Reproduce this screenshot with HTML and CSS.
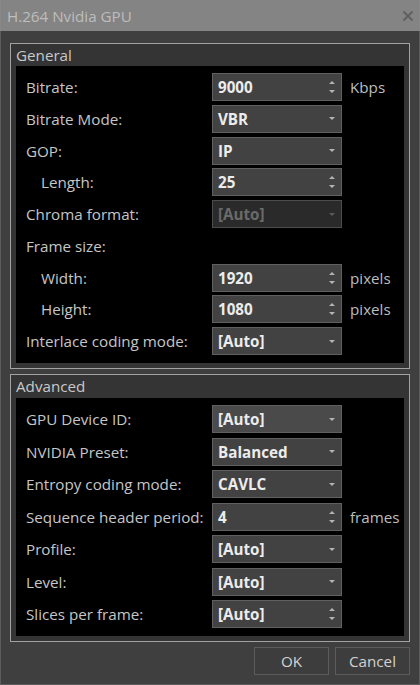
FILE: index.html
```html
<!DOCTYPE html>
<html>
<head>
<meta charset="utf-8">
<link rel="stylesheet" href="styles.css">
</head>
<body>
<div class="window">
  <div class="titlebar">
    <span class="title">H.264 Nvidia GPU</span>
    <svg class="close" width="12" height="12" viewBox="0 0 12 12"><path d="M1.5 1.5 L10.5 10.5 M10.5 1.5 L1.5 10.5" stroke="#606060" stroke-width="2" fill="none"/></svg>
  </div>
  <div class="content">
    <div class="group">
      <div class="group-title">General</div>
      <div class="panel general">
        <div class="label">Bitrate:</div>
        <div class="ctrl spin"><span class="val">9000</span><svg class="arrows" width="8" height="14" viewBox="0 0 8 14"><path d="M1 4 L4 1 L7 4 Z M1 10 L4 13 L7 10 Z" fill="#b4b4b4"/></svg></div>
        <div class="unit">Kbps</div>

        <div class="label">Bitrate Mode:</div>
        <div class="ctrl combo"><span class="val">VBR</span><svg class="arrow" width="8" height="5" viewBox="0 0 8 5"><path d="M1 1 L7 1 L4 4 Z" fill="#b4b4b4"/></svg></div>
        <div class="unit"></div>

        <div class="label">GOP:</div>
        <div class="ctrl combo"><span class="val">IP</span><svg class="arrow" width="8" height="5" viewBox="0 0 8 5"><path d="M1 1 L7 1 L4 4 Z" fill="#b4b4b4"/></svg></div>
        <div class="unit"></div>

        <div class="label indent">Length:</div>
        <div class="ctrl spin"><span class="val">25</span><svg class="arrows" width="8" height="14" viewBox="0 0 8 14"><path d="M1 4 L4 1 L7 4 Z M1 10 L4 13 L7 10 Z" fill="#b4b4b4"/></svg></div>
        <div class="unit"></div>

        <div class="label">Chroma format:</div>
        <div class="ctrl combo disabled"><span class="val">[Auto]</span><svg class="arrow" width="8" height="5" viewBox="0 0 8 5"><path d="M1 1 L7 1 L4 4 Z" fill="#5a5a5a"/></svg></div>
        <div class="unit"></div>

        <div class="label">Frame size:</div>
        <div class="empty"></div>
        <div class="unit"></div>

        <div class="label indent">Width:</div>
        <div class="ctrl spin"><span class="val">1920</span><svg class="arrows" width="8" height="14" viewBox="0 0 8 14"><path d="M1 4 L4 1 L7 4 Z M1 10 L4 13 L7 10 Z" fill="#b4b4b4"/></svg></div>
        <div class="unit">pixels</div>

        <div class="label indent">Height:</div>
        <div class="ctrl spin"><span class="val">1080</span><svg class="arrows" width="8" height="14" viewBox="0 0 8 14"><path d="M1 4 L4 1 L7 4 Z M1 10 L4 13 L7 10 Z" fill="#b4b4b4"/></svg></div>
        <div class="unit">pixels</div>

        <div class="label">Interlace coding mode:</div>
        <div class="ctrl combo"><span class="val">[Auto]</span><svg class="arrow" width="8" height="5" viewBox="0 0 8 5"><path d="M1 1 L7 1 L4 4 Z" fill="#b4b4b4"/></svg></div>
        <div class="unit"></div>
      </div>
    </div>

    <div class="group advanced-group">
      <div class="group-title">Advanced</div>
      <div class="panel advanced">
        <div class="label">GPU Device ID:</div>
        <div class="ctrl combo hot"><span class="val">[Auto]</span><svg class="arrow" width="8" height="5" viewBox="0 0 8 5"><path d="M1 1 L7 1 L4 4 Z" fill="#b4b4b4"/></svg></div>
        <div class="unit"></div>

        <div class="label">NVIDIA Preset:</div>
        <div class="ctrl combo"><span class="val">Balanced</span><svg class="arrow" width="8" height="5" viewBox="0 0 8 5"><path d="M1 1 L7 1 L4 4 Z" fill="#b4b4b4"/></svg></div>
        <div class="unit"></div>

        <div class="label">Entropy coding mode:</div>
        <div class="ctrl combo"><span class="val">CAVLC</span><svg class="arrow" width="8" height="5" viewBox="0 0 8 5"><path d="M1 1 L7 1 L4 4 Z" fill="#b4b4b4"/></svg></div>
        <div class="unit"></div>

        <div class="label">Sequence header period:</div>
        <div class="ctrl spin"><span class="val">4</span><svg class="arrows" width="8" height="14" viewBox="0 0 8 14"><path d="M1 4 L4 1 L7 4 Z M1 10 L4 13 L7 10 Z" fill="#b4b4b4"/></svg></div>
        <div class="unit">frames</div>

        <div class="label">Profile:</div>
        <div class="ctrl combo"><span class="val">[Auto]</span><svg class="arrow" width="8" height="5" viewBox="0 0 8 5"><path d="M1 1 L7 1 L4 4 Z" fill="#b4b4b4"/></svg></div>
        <div class="unit"></div>

        <div class="label">Level:</div>
        <div class="ctrl combo"><span class="val">[Auto]</span><svg class="arrow" width="8" height="5" viewBox="0 0 8 5"><path d="M1 1 L7 1 L4 4 Z" fill="#b4b4b4"/></svg></div>
        <div class="unit"></div>

        <div class="label">Slices per frame:</div>
        <div class="ctrl spin"><span class="val">[Auto]</span><svg class="arrows" width="8" height="14" viewBox="0 0 8 14"><path d="M1 4 L4 1 L7 4 Z M1 10 L4 13 L7 10 Z" fill="#b4b4b4"/></svg></div>
        <div class="unit"></div>
      </div>
    </div>

    <div class="buttons">
      <div class="btn">OK</div>
      <div class="btn">Cancel</div>
    </div>
  </div>
</div>
</body>
</html>
```

FILE: styles.css
```css
html, body {
  margin: 0;
  padding: 0;
  background: #3f3f3f;
}
.window {
  width: 420px;
  height: 685px;
  box-sizing: border-box;
  border: 1px solid #5c5c5c;
  border-top: none;
  background: #3f3f3f;
  font-family: "Open Sans", "Noto Sans", sans-serif;
  font-size: 15.2px;
  color: #c4c4c4;
  display: flex;
  flex-direction: column;
}
.titlebar {
  height: 31px;
  background: #848484;
  display: flex;
  align-items: center;
  justify-content: space-between;
  padding: 0 5px 0 6px;
  margin: 0 -1px;
  border-left: 1px solid #888;
  border-right: 1px solid #888;
}
.title {
  color: #bdbdbd;
  font-size: 15.2px;
}
.close {
  display: block;
}
.content {
  padding: 12px 9px 0 9px;
  display: flex;
  flex-direction: column;
}
.group {
  border: 1px solid #a2a2a2;
  background: #343434;
  padding: 0 5px 5px 5px;
}
.advanced-group {
  margin-top: 5px;
}
.group-title {
  height: 22px;
  line-height: 22px;
  font-size: 15.2px;
  color: #c8c8c8;
}
.advanced-group .group-title {
  height: 23px;
  line-height: 23px;
}
.panel {
  background: #000;
  display: grid;
  grid-template-columns: 186px 130px 1fr;
  grid-auto-rows: 28px;
  padding: 7px 0 8px 10px;
  align-items: center;
}
.general {
  row-gap: 3.75px;
}
.advanced {
  row-gap: 4.5px;
}
.label {
  color: #c6c6c6;
  white-space: nowrap;
}
.label.indent {
  padding-left: 15px;
}
.unit {
  padding-left: 8px;
  color: #bdbdbd;
}
.ctrl {
  height: 28px;
  box-sizing: border-box;
  border: 1px solid #606060;
  background: #424242;
  display: flex;
  align-items: center;
  justify-content: space-between;
  padding: 0 5px 0 5px;
}
.ctrl.hot {
  background: #4a4a4a;
}
.val {
  color: #ececec;
  font-weight: 700;
  font-size: 15.2px;
}
.ctrl.disabled {
  background: #2a2a2a;
  border-color: #4c4c4c;
}
.ctrl.disabled .val {
  color: #6a6a6a;
}
.arrows, .arrow {
  display: block;
}
.buttons {
  display: flex;
  justify-content: flex-end;
  gap: 6px;
  margin-top: 5px;
}
.btn {
  width: 75px;
  height: 28px;
  box-sizing: border-box;
  border: 1px solid #5c5c5c;
  background: #3d3d3d;
  color: #d2d2d2;
  font-size: 15.2px;
  display: flex;
  align-items: center;
  justify-content: center;
}
```
